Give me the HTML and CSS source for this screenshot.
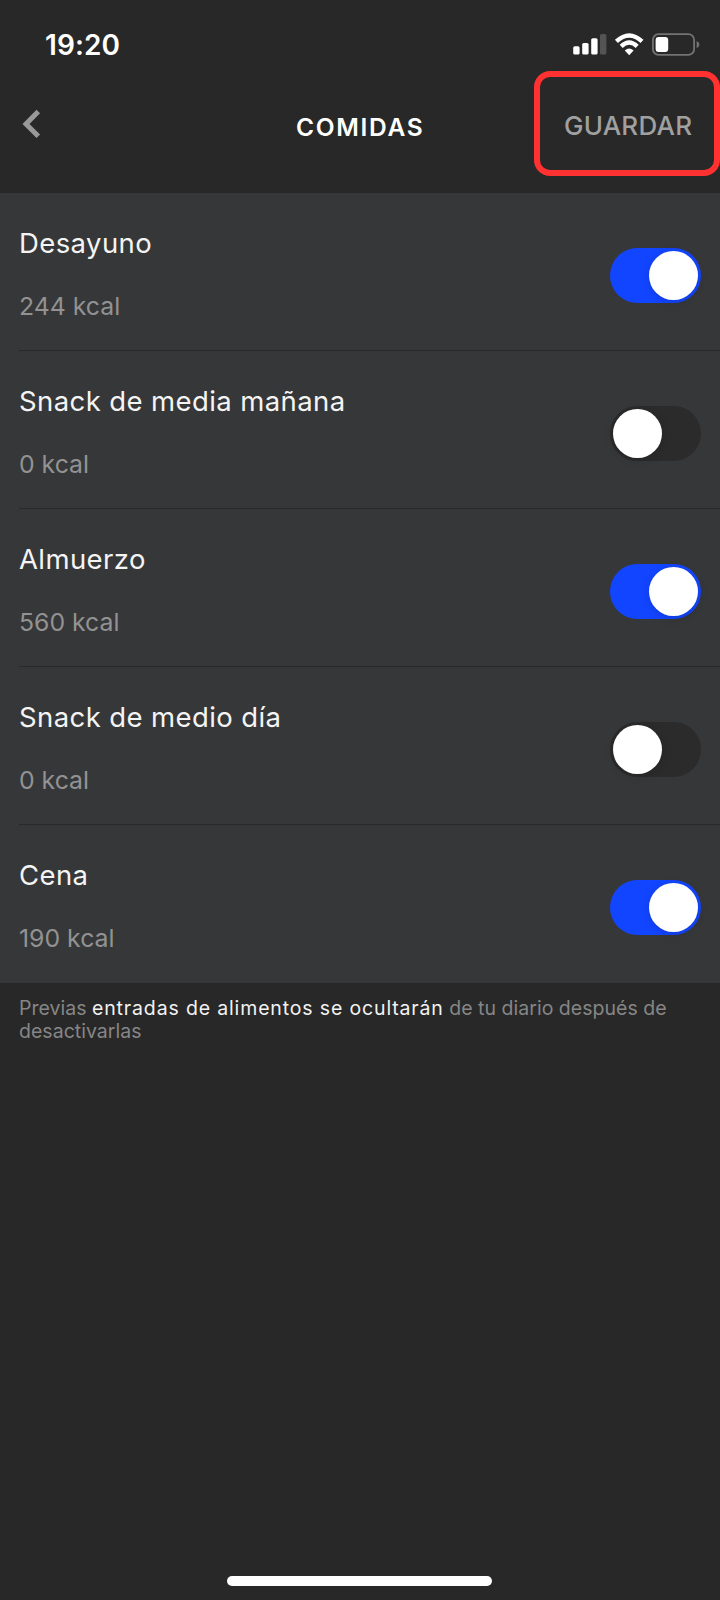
FILE: index.html
```html
<!DOCTYPE html>
<html lang="es">
<head>
<meta charset="utf-8">
<title>Comidas</title>
<link rel="stylesheet" href="styles.css">
</head>
<body>
<div class="screen">
  <header class="top">
    <div class="status">
      <span class="time">19:20</span>
      <svg class="status-icons" width="130" height="26" viewBox="0 0 130 26">
        <g fill="#fff">
          <rect x="3.2" y="16.3" width="6.4" height="8.3" rx="1.6"/>
          <rect x="12.2" y="13" width="6.4" height="11.6" rx="1.6"/>
          <rect x="21.2" y="8.2" width="6.4" height="16.4" rx="1.6"/>
          <rect x="30" y="4" width="6.4" height="20.6" rx="1.6" fill="#545454"/>
        </g>
        <g fill="none" stroke="#fff" stroke-width="4.3">
          <path d="M46.4 11.4 Q59.2 -.6 72 11.4"/>
          <path d="M51.2 16.4 Q59.2 8.6 67.2 16.4"/>
        </g>
        <path d="M59.2 25.2 L54.8 20.5 Q59.2 16.4 63.6 20.5 Z" fill="#fff"/>
        <rect x="82.9" y="4.2" width="41.2" height="20.6" rx="5.6" fill="none" stroke="#737373" stroke-width="1.8"/>
        <rect x="85.6" y="6.9" width="12.6" height="15.2" rx="3" fill="#fff"/>
        <path d="M126.6 11 Q129.4 12.2 129.4 14.5 Q129.4 16.8 126.6 18 Z" fill="#737373"/>
      </svg>
    </div>
    <nav class="nav">
      <svg class="back" width="20" height="30" viewBox="0 0 20 30"><path d="M17.3 2.5 L5 15 L17.3 27.3" fill="none" stroke="#999" stroke-width="5"/></svg>
      <h1 class="heading">COMIDAS</h1>
      <div class="save-frame"><span class="save">GUARDAR</span></div>
    </nav>
  </header>
  <main class="list">
    <section class="row"><div class="info"><span class="name">Desayuno</span><span class="kcal">244 kcal</span></div><span class="toggle on"><i class="knob"></i></span></section>
    <section class="row"><div class="info"><span class="name">Snack de media mañana</span><span class="kcal">0 kcal</span></div><span class="toggle"><i class="knob"></i></span></section>
    <section class="row"><div class="info"><span class="name">Almuerzo</span><span class="kcal">560 kcal</span></div><span class="toggle on"><i class="knob"></i></span></section>
    <section class="row"><div class="info"><span class="name">Snack de medio día</span><span class="kcal">0 kcal</span></div><span class="toggle"><i class="knob"></i></span></section>
    <section class="row"><div class="info"><span class="name">Cena</span><span class="kcal">190 kcal</span></div><span class="toggle on"><i class="knob"></i></span></section>
  </main>
  <p class="note">Previas <span class="strong">entradas de alimentos se ocultarán</span> de tu diario después de<br>desactivarlas</p>
  <div class="home"></div>
</div>
</body>
</html>
```
FILE: styles.css
```css
* { box-sizing: border-box; }
body { margin: 0; background: #282828; font-family: Inter, "Liberation Sans", sans-serif; }
.screen { width: 720px; height: 1600px; display: flex; flex-direction: column; overflow: hidden; background: #282828; }
.top { height: 193px; flex: none; }
.status { height: 71px; padding: 27px 20px 0 44px; display: flex; justify-content: space-between; align-items: flex-start; }
.time { margin-top: 1px; padding-left: 1px; font-size: 28px; line-height: 34px; font-weight: 600; letter-spacing: .1px; color: #fff; }
.status-icons { margin-top: 3px; }
.nav { display: grid; grid-template-columns: 220px 1fr 186px; height: 106px; align-items: start; }
.back { margin: 38px 0 0 20.5px; }
.heading { margin: 41px 0 0; padding-left: 76px; font-size: 24.5px; line-height: 30px; font-weight: 600; letter-spacing: 1.7px; color: #fff; white-space: nowrap; }
.save-frame { height: 105px; border: 6px solid #ff3131; border-radius: 16px; padding: 34px 0 0 24px; }
.save { display: block; font-size: 26px; line-height: 30px; font-weight: 500; letter-spacing: .25px; color: #a0a0a0; }
.list { flex: none; background: #363739; }
.row { height: 158px; margin-left: 19px; padding-right: 19px; display: flex; justify-content: space-between; border-bottom: 1px solid #29292a; }
.row:last-child { border-bottom-color: transparent; }
.info { display: flex; flex-direction: column; gap: 31px; padding-top: 33px; }
.name { font-size: 27.5px; line-height: 34px; letter-spacing: .4px; color: #f4f4f4; }
.kcal { font-size: 24.8px; line-height: 31px; letter-spacing: 0; color: #929292; }
.toggle { width: 91px; height: 55px; margin-top: 54.5px; border-radius: 28px; padding: 3px; background: #2b2b2b; display: flex; }
.toggle.on { background: #1245ff; justify-content: flex-end; }
.knob { width: 49px; height: 49px; border-radius: 50%; background: #fff; box-shadow: 0 2px 8px rgba(0, 0, 0, .15); }
.note { margin: 14px 19px 0; font-size: 19.5px; line-height: 23.4px; letter-spacing: .02px; color: #868686; white-space: nowrap; }
.strong { color: #f2f2f2; letter-spacing: .85px; }
.home { width: 265px; height: 10px; margin: auto 0 14px 227px; border-radius: 5px; background: #fff; }
```
